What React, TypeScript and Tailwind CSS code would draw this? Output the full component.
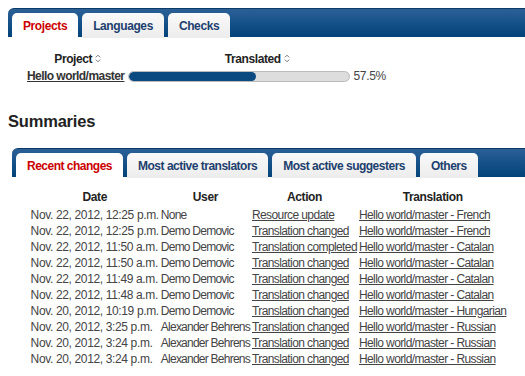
const rows = [
  ["Nov. 22, 2012, 12:25 p.m.", "None", "Resource update", "Hello world/master - French"],
  ["Nov. 22, 2012, 12:25 p.m.", "Demo Demovic", "Translation changed", "Hello world/master - French"],
  ["Nov. 22, 2012, 11:50 a.m.", "Demo Demovic", "Translation completed", "Hello world/master - Catalan"],
  ["Nov. 22, 2012, 11:50 a.m.", "Demo Demovic", "Translation changed", "Hello world/master - Catalan"],
  ["Nov. 22, 2012, 11:49 a.m.", "Demo Demovic", "Translation changed", "Hello world/master - Catalan"],
  ["Nov. 22, 2012, 11:48 a.m.", "Demo Demovic", "Translation changed", "Hello world/master - Catalan"],
  ["Nov. 20, 2012, 10:19 p.m.", "Demo Demovic", "Translation changed", "Hello world/master - Hungarian"],
  ["Nov. 20, 2012, 3:25 p.m.", "Alexander Behrens", "Translation changed", "Hello world/master - Russian"],
  ["Nov. 20, 2012, 3:24 p.m.", "Alexander Behrens", "Translation changed", "Hello world/master - Russian"],
  ["Nov. 20, 2012, 3:24 p.m.", "Alexander Behrens", "Translation changed", "Hello world/master - Russian"],
];

function SortIcon() {
  return (
    <svg width="6" height="9" viewBox="0 0 6 9" className="inline-block ml-[3px] -mt-[3px]">
      <path d="M0.8 3.4 L3 1.2 L5.2 3.4" fill="none" stroke="#777" strokeWidth="1" />
      <path d="M0.8 5.6 L3 7.8 L5.2 5.6" fill="none" stroke="#777" strokeWidth="1" />
    </svg>
  );
}

function Tabs({ items, active, tight }: { items: string[]; active: number; tight?: boolean }) {
  const base =
    "shrink-0 whitespace-nowrap h-[25px] flex items-center rounded-t-[5px] font-bold text-[12px] " +
    (tight ? "px-[11px] tracking-[-0.5px]" : "px-[11px] tracking-[-0.4px]");
  return (
    <div className="flex gap-[4px] pt-[4px] pl-[4px] h-[29px] rounded-tl-[6px] border-t border-[#0d3a66] bg-gradient-to-b from-[#2a6096] via-[#155189] to-[#03437a]">
      {items.map((t, i) => (
        <div
          key={t}
          className={
            i === active
              ? base + " bg-white text-[#cc0000]"
              : base + " bg-gradient-to-b from-[#fafafa] to-[#ececec] text-[#1d3f6e]"
          }
        >
          {t}
        </div>
      ))}
    </div>
  );
}

export default function App() {
  return (
    <div className="w-[525px] h-[376px] overflow-hidden bg-white pt-[8px] text-[#444]" style={{ fontFamily: '"Liberation Sans", Arial, sans-serif' }}>
      <div className="ml-[8px]">
        <Tabs items={["Projects", "Languages", "Checks"]} active={0} />
        <table className="ml-[19px] mt-[14px] border-collapse text-[12px] leading-[16px]">
          <thead>
            <tr className="text-[#222] font-bold tracking-[-0.4px]">
              <th className="px-0 pb-[1px] text-center">Project<SortIcon /></th>
              <th className="px-0 pb-[1px] text-center">Translated<SortIcon /></th>
            </tr>
          </thead>
          <tbody>
            <tr>
              <td className="pr-[4px]"><a className="font-bold underline text-[#333] tracking-[-0.55px]">Hello world/master</a></td>
              <td>
                <div className="flex items-center">
                  <div className="w-[222px] h-[11px] rounded-full border border-[#bbb] bg-[#ddd] overflow-hidden">
                    <div className="h-full bg-[#0b4a80] rounded-full" style={{ width: "57.5%" }} />
                  </div>
                  <span className="ml-[3px] text-[#444] tracking-[-0.3px]">57.5%</span>
                </div>
              </td>
            </tr>
          </tbody>
        </table>
      </div>
      <h2 className="ml-[8px] mt-[27px] text-[16.5px] leading-[20px] font-bold text-[#222] tracking-[-0.2px]">Summaries</h2>
      <div className="ml-[12px] mt-[17px]">
        <Tabs items={["Recent changes", "Most active translators", "Most active suggesters", "Others"]} active={0} tight />
        <table className="mx-auto mt-[12px] border-collapse text-[12px] leading-[16px] tracking-[-0.36px]">
          <thead>
            <tr className="text-[#222] font-bold">
              <th className="px-[1px] pb-[2px]">Date</th>
              <th className="px-[1px] pb-[2px]">User</th>
              <th className="px-[1px] pb-[2px]">Action</th>
              <th className="px-[1px] pb-[2px]">Translation</th>
            </tr>
          </thead>
          <tbody>
            {rows.map((r, i) => (
              <tr key={i}>
                <td className="px-[1px] whitespace-nowrap">{r[0]}</td>
                <td className="px-[1px] whitespace-nowrap tracking-[-0.76px]">{r[1]}</td>
                <td className="px-[1px] whitespace-nowrap tracking-[-0.6px]"><a className="underline">{r[2]}</a></td>
                <td className="px-[1px] whitespace-nowrap tracking-[-0.6px]"><a className="underline">{r[3]}</a></td>
              </tr>
            ))}
          </tbody>
        </table>
      </div>
    </div>
  );
}
